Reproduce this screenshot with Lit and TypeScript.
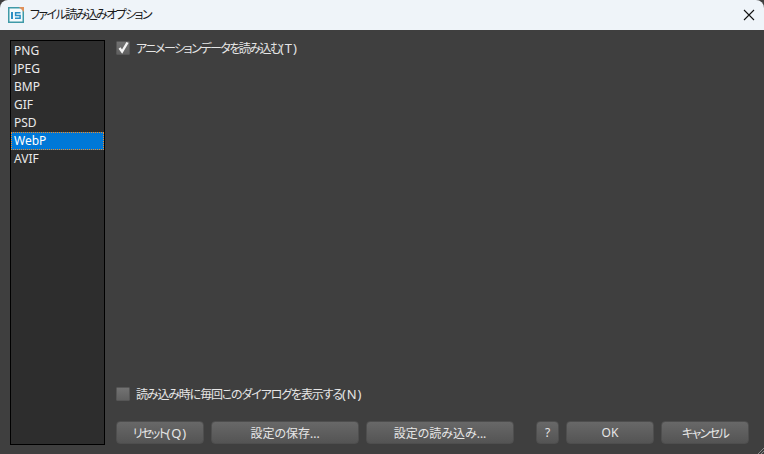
import { LitElement, html, css } from "lit";
import { customElement } from "lit/decorators.js";

@customElement("app-root")
export class AppRoot extends LitElement {
  static styles = css`
    :host { display: block; width: 764px; height: 454px; overflow: hidden; font-family: "Noto Sans", "Noto Sans CJK JP", sans-serif; font-size: 12px; color: #e6e6e6; font-feature-settings: "palt"; }
    .win { width: 764px; height: 454px; background: #3f3f3f; display: flex; flex-direction: column; position: relative; }
    .title { height: 30px; background: #eff4f9; border-radius: 8px 8px 0 0; display: flex; align-items: center; color: #1a1a1a; flex: none; }
    .title-icon { margin-left: 8px; width: 16px; height: 16px; flex: none; }
    .title-text { margin-left: 6px; flex: 1; font-size: 12px; line-height: 16px; letter-spacing: -1.6px; }
    .close { width: 16px; height: 16px; margin-right: 7px; flex: none; }
    .body { flex: 1; display: flex; padding: 10px 15px 9px 10px; gap: 11px; min-height: 0; }
    .list { width: 95px; flex: none; box-sizing: border-box; background: #2d2d2d; border: 1px solid #000; padding: 1px 0; }
    .item { height: 18px; line-height: 18px; padding-left: 3px; color: #eaeaea; box-sizing: border-box; }
    .item.sel { background: #0078d7; color: #fff; outline: 1px dotted #f08a24; outline-offset: -1px; }
    .main { flex: 1; display: flex; flex-direction: column; min-width: 0; }
    .check { display: flex; align-items: center; height: 16px; gap: 6px; }
    .label-a { letter-spacing: -1.5px; }
    .label-b { letter-spacing: -1.15px; }
    .paren { font-size: 13px; letter-spacing: 0.9px; }
    .box { width: 14px; height: 14px; box-sizing: border-box; background: linear-gradient(#727272, #606060); border: 1px solid #565656; border-radius: 1px; position: relative; flex: none; }
    .box svg { position: absolute; left: -1px; top: -2px; }
    .spacer { flex: 1; }
    .buttons { display: flex; gap: 7px; margin: 19px 0 1px; }
    button { font: inherit; font-feature-settings: inherit; color: #e6e6e6; height: 23px; padding: 0; box-sizing: border-box; border: 1px solid #4e4e4e; border-radius: 4px; background: linear-gradient(#686868, #545454); flex: none; }
    .kana { letter-spacing: -1.6px; }
    .b-reset { width: 88px; }
    .b-save, .b-load { width: 148px; }
    .b-help { width: 23px; margin-left: 15px; }
    .b-ok, .b-cancel { width: 88px; }
    .grip { position: absolute; right: 0; bottom: 0; }
  `;

  render() {
    const items = ["PNG", "JPEG", "BMP", "GIF", "PSD", "WebP", "AVIF"];
    return html`
      <div class="win">
        <div class="title">
          <svg class="title-icon" viewBox="0 0 16 16">
            <rect x="0.75" y="0.75" width="14.5" height="14.5" fill="#f4fafc" stroke="#3f9aa8" stroke-width="1.5"/>
            <path d="M11 0h5v5z" fill="#e0905a"/>
            <rect x="3" y="5" width="2" height="7" fill="#2a8fc4"/>
            <path d="M12.5 5.8H7.6v2.7h4.5v2.7H7" fill="none" stroke="#2a8fc4" stroke-width="1.5"/>
          </svg>
          <span class="title-text">ファイル読み込みオプション</span>
          <svg class="close" viewBox="0 0 16 16"><path d="M3 3l10 10M13 3L3 13" stroke="#111" stroke-width="1.1" fill="none"/></svg>
        </div>
        <div class="body">
          <div class="list">
            ${items.map((i) => html`<div class="item ${i === "WebP" ? "sel" : ""}">${i}</div>`)}
          </div>
          <div class="main">
            <div class="check">
              <span class="box"><svg width="14" height="14" viewBox="0 0 14 14"><path d="M3.5 8l2.6 3.6L11.5 2.5" fill="none" stroke="#f4f4f4" stroke-width="2.4"/></svg></span>
              <span class="label-a">アニメーションデータを読み込む<span class="paren">(T)</span></span>
            </div>
            <div class="spacer"></div>
            <div class="check">
              <span class="box"></span>
              <span class="label-b">読み込み時に毎回このダイアログを表示する<span class="paren">(N)</span></span>
            </div>
            <div class="buttons">
              <button class="b-reset"><span class="kana">リセット</span><span class="paren">(Q)</span></button>
              <button class="b-save">設定の保存...</button>
              <button class="b-load">設定の読み込み...</button>
              <button class="b-help">?</button>
              <button class="b-ok">OK</button>
              <button class="b-cancel"><span class="kana">キャンセル</span></button>
            </div>
          </div>
        </div>
        <svg class="grip" width="8" height="8" viewBox="0 0 8 8"><path d="M8 2L2 8M8 5L5 8" stroke="#8a8a8a" stroke-width="1" fill="none"/></svg>
      </div>
    `;
  }
}
